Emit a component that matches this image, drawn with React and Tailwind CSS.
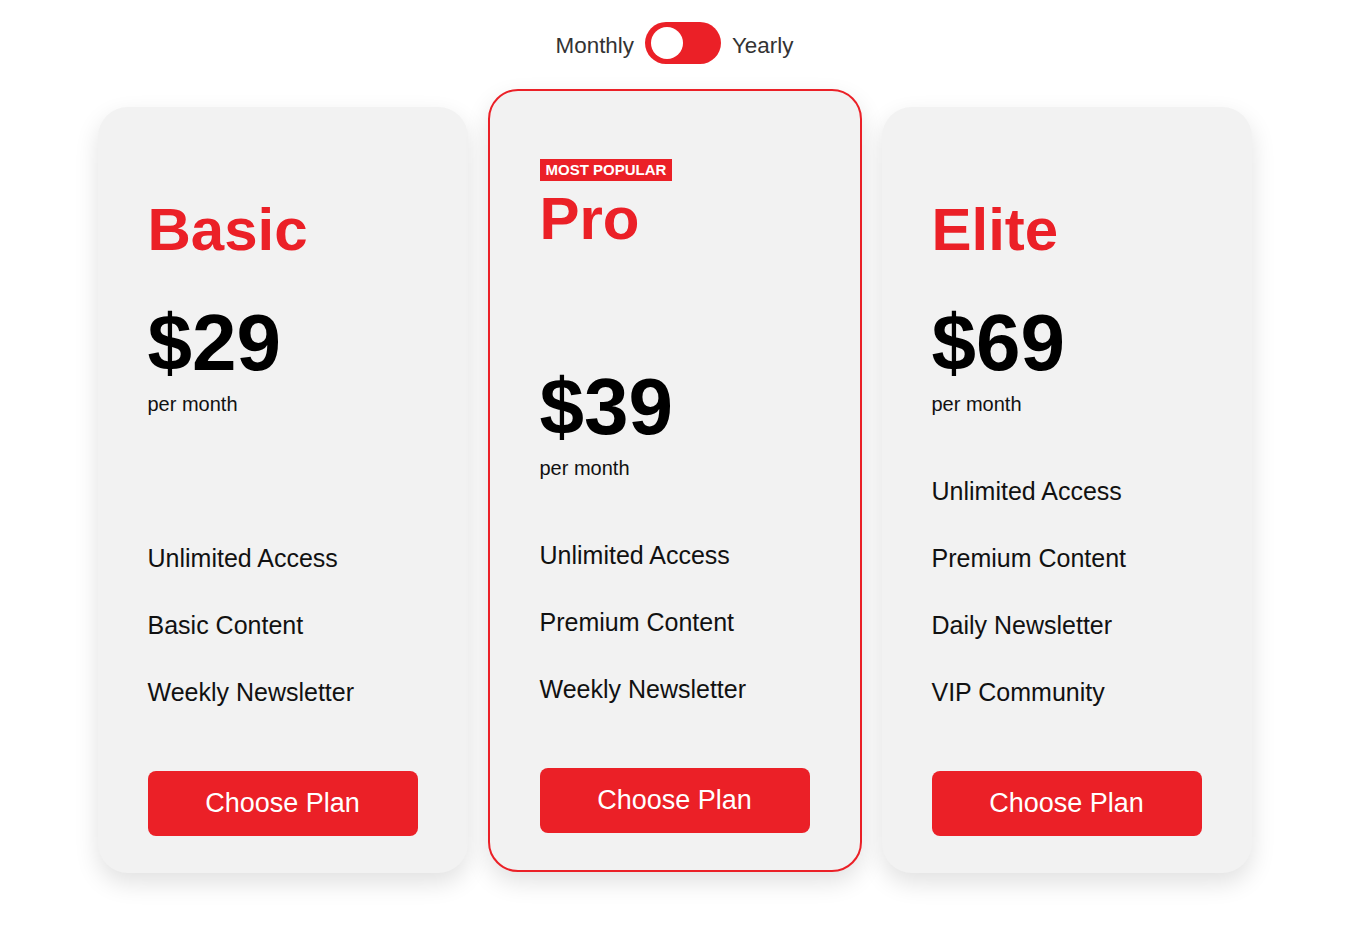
import React from "react";

const plans = [
  { name: "Basic", price: "$29", features: ["Unlimited Access", "Basic Content", "Weekly Newsletter"] },
  { name: "Pro", price: "$39", popular: true, features: ["Unlimited Access", "Premium Content", "Weekly Newsletter"] },
  { name: "Elite", price: "$69", features: ["Unlimited Access", "Premium Content", "Daily Newsletter", "VIP Community"] },
];

function Features({ items }) {
  return (
    <ul className="mt-auto flex flex-col">
      {items.map((f) => (
        <li key={f} className="h-[67px] py-[20px] text-[25px] leading-[27px] text-[#111]">
          {f}
        </li>
      ))}
    </ul>
  );
}

function Button() {
  return (
    <button className="mt-[45px] h-[65px] w-full shrink-0 rounded-[8px] bg-[#eb2027] text-[27px] leading-none text-white">
      Choose Plan
    </button>
  );
}

function Card({ plan }) {
  if (plan.popular) {
    return (
      <div className="flex h-[783px] w-[374px] flex-col rounded-[30px] border-2 border-[#eb2027] bg-[#f2f2f2] px-[50px] pt-[68px] pb-[37px] shadow-[0_10px_25px_rgba(0,0,0,0.12)]">
        <div className="self-start bg-[#eb2027] px-[6px] text-[15px] font-bold leading-[22px] text-white">
          MOST POPULAR
        </div>
        <h2 className="mt-[8px] text-[60px] font-bold leading-[60px] text-[#eb2027]">{plan.name}</h2>
        <div className="mt-[118px] text-[80px] font-bold leading-[80px] text-black">{plan.price}</div>
        <div className="mt-[11px] text-[20px] leading-[20px] text-[#111]">per month</div>
        <Features items={plan.features} />
        <Button />
      </div>
    );
  }
  return (
    <div className="mt-[18px] flex h-[766px] w-[370px] flex-col rounded-[30px] bg-[#f2f2f2] px-[50px] pt-[93px] pb-[37px] shadow-[0_10px_25px_rgba(0,0,0,0.12)]">
      <h2 className="text-[60px] font-bold leading-[60px] text-[#eb2027]">{plan.name}</h2>
      <div className="mt-[43px] text-[80px] font-bold leading-[80px] text-black">{plan.price}</div>
      <div className="mt-[11px] text-[20px] leading-[20px] text-[#111]">per month</div>
      <Features items={plan.features} />
      <Button />
    </div>
  );
}

export default function App() {
  return (
    <div className="min-h-[933px] w-[1349px] bg-white pt-[22px] font-['Liberation_Sans',Arial,sans-serif]">
      <div className="flex h-[42px] items-start justify-center gap-[11px]">
        <span className="text-[22.4px] leading-[48px] text-[#333]">Monthly</span>
        <div className="relative h-[42px] w-[76px] rounded-full bg-[#eb2027]">
          <div className="absolute left-[6px] top-[5px] h-[32px] w-[32px] rounded-full bg-white" />
        </div>
        <span className="text-[22.4px] leading-[48px] text-[#333]">Yearly</span>
      </div>
      <div className="mt-[25px] flex items-start justify-center gap-[20px]">
        {plans.map((p) => (
          <Card key={p.name} plan={p} />
        ))}
      </div>
    </div>
  );
}
